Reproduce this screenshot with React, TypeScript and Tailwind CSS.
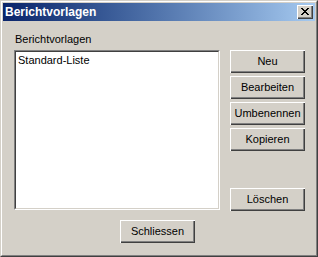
import React from "react";

const btn =
  "w-[75px] h-[23px] bg-[#d4d0c8] text-black text-[11px] leading-[13px] flex items-center justify-center shadow-[inset_1px_1px_0_#ffffff,inset_-1px_-1px_0_#404040,inset_-2px_-2px_0_#808080]";

function CloseGlyph() {
  const rows = [
    "xx....xx",
    ".xx..xx.",
    "..xxxx..",
    "...xx...",
    "..xxxx..",
    ".xx..xx.",
    "xx....xx",
  ];
  const rects: React.ReactElement[] = [];
  rows.forEach((r, y) =>
    r.split("").forEach((c, x) => {
      if (c === "x") rects.push(<rect key={`${x}-${y}`} x={x} y={y} width={1} height={1} fill="#000" />);
    })
  );
  return (
    <svg width="8" height="7" viewBox="0 0 8 7" shapeRendering="crispEdges">
      {rects}
    </svg>
  );
}

export default function App() {
  return (
    <div
      className="w-[318px] h-[257px] bg-[#d4d0c8] border border-t-[#d4d0c8] border-l-[#d4d0c8] border-r-[#404040] border-b-[#404040]"
      style={{ fontFamily: '"Liberation Sans", Arial, sans-serif' }}
    >
      <div className="w-full h-full border border-t-white border-l-white border-r-[#808080] border-b-[#808080] p-px flex flex-col">
        <div className="h-[18px] shrink-0 bg-gradient-to-r from-[#0a246a] to-[#a6caf0] flex items-center justify-between pl-[2px] pr-[2px]">
          <span className="text-white font-bold text-[12px] leading-[14px]">Berichtvorlagen</span>
          <div className="w-[16px] h-[14px] bg-[#d4d0c8] flex items-center justify-center shadow-[inset_1px_1px_0_#ffffff,inset_-1px_-1px_0_#404040,inset_-2px_-2px_0_#808080]">
            <div className="pb-px">
              <CloseGlyph />
            </div>
          </div>
        </div>
        <div className="flex-1 pl-[11px] pt-[12px] flex flex-col">
          <div className="flex gap-[10px]">
            <div className="flex flex-col">
              <div className="text-[11px] leading-[13px] text-black pl-[1px] h-[13px]">Berichtvorlagen</div>
              <div className="mt-[4px] w-[206px] h-[160px] border border-t-[#808080] border-l-[#808080] border-r-white border-b-white">
                <div className="w-full h-full bg-white border border-t-[#404040] border-l-[#404040] border-r-[#d4d0c8] border-b-[#d4d0c8] pl-[2px] pt-[2px]">
                  <div className="text-[11px] leading-[13px] text-black">Standard-Liste</div>
                </div>
              </div>
            </div>
            <div className="flex flex-col pt-[17px]">
              <div className="flex flex-col gap-[3px]">
                <div className={btn}>Neu</div>
                <div className={btn}>Bearbeiten</div>
                <div className={btn}>Umbenennen</div>
                <div className={btn}>Kopieren</div>
              </div>
              <div className={`${btn} mt-[37px]`}>Löschen</div>
            </div>
          </div>
          <div className={`${btn} ml-[106px] mt-[9px]`}>Schliessen</div>
        </div>
      </div>
    </div>
  );
}
